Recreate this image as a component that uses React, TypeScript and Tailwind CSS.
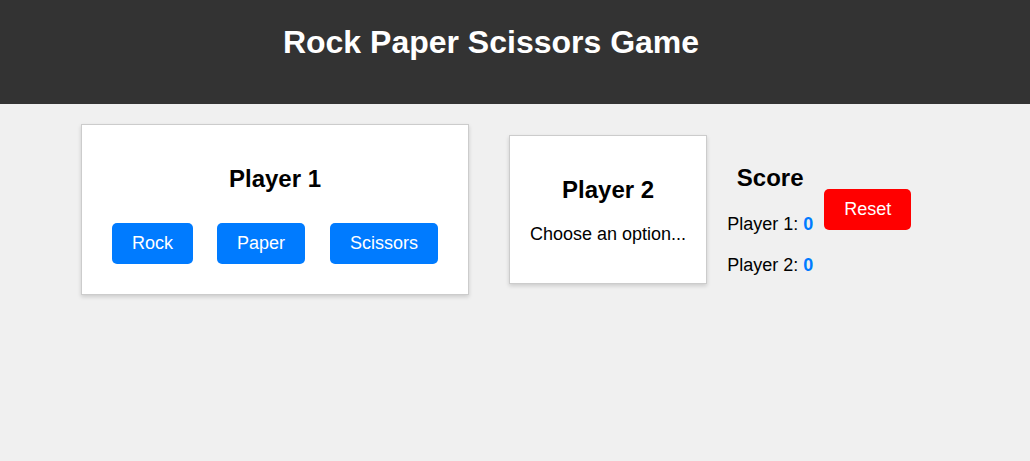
import React from "react";

export default function App() {
  const choices = ["Rock", "Paper", "Scissors"];
  return (
    <div className="min-h-[461px] bg-[#f0f0f0] font-['Liberation_Sans',Arial,sans-serif] text-black">
      <header className="h-[104px] bg-[#333333] pt-[24px] pr-[48px] text-center text-white">
        <h1 className="text-[32px] font-bold leading-[37px]">Rock Paper Scissors Game</h1>
      </header>
      <main className="flex items-center pt-[20px] pl-[81px]">
        <div className="w-[388px] border border-[#cccccc] bg-white px-[20px] pt-[40px] pb-[30px] text-center shadow-[0_2px_4px_rgba(0,0,0,0.15)]">
          <h2 className="text-[24px] font-bold leading-[28px]">Player 1</h2>
          <div className="mt-[30px] flex pl-[10px]">
            <button className="h-[41px] rounded-[5px] bg-[#007bff] px-[20px] text-[18px] leading-[21px] text-white">
              {choices[0]}
            </button>
            <button className="ml-[24px] h-[41px] rounded-[5px] bg-[#007bff] px-[20px] text-[18px] leading-[21px] text-white">
              {choices[1]}
            </button>
            <button className="ml-[25px] h-[41px] rounded-[5px] bg-[#007bff] px-[20px] text-[18px] leading-[21px] text-white">
              {choices[2]}
            </button>
          </div>
        </div>
        <div className="ml-[40px] whitespace-nowrap border border-[#cccccc] bg-white px-[20px] pt-[40px] pb-[38px] text-center shadow-[0_2px_4px_rgba(0,0,0,0.15)]">
          <h2 className="text-[24px] font-bold leading-[28px]">Player 2</h2>
          <p className="mt-[20px] text-[18px] leading-[21px]">Choose an option...</p>
        </div>
        <div className="ml-[20px] flex flex-col whitespace-nowrap pt-[20px] text-[18px] leading-[21px]">
          <h2 className="text-center text-[24px] font-bold leading-[28px]">Score</h2>
          <p className="mt-[22px]">
            Player 1: <span className="font-bold text-[#007bff]">0</span>
          </p>
          <p className="mt-[20px]">
            Player 2: <span className="font-bold text-[#007bff]">0</span>
          </p>
        </div>
        <button className="ml-[11px] h-[41px] rounded-[5px] bg-[#ff0000] px-[20px] text-[18px] leading-[21px] text-white">
          Reset
        </button>
      </main>
    </div>
  );
}
